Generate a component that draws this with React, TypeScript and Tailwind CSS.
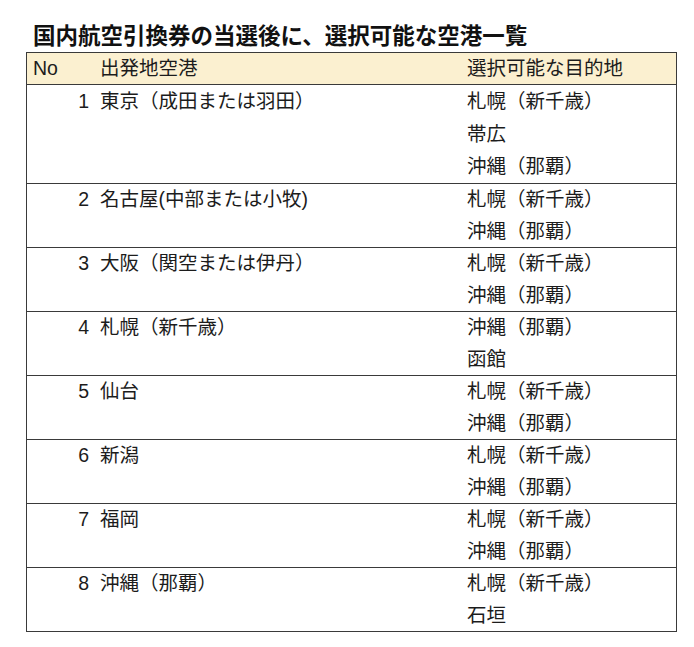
const rows: { no: number; origin: string; dests: string[] }[] = [
  { no: 1, origin: '東京（成田または羽田）', dests: ['札幌（新千歳）', '帯広', '沖縄（那覇）'] },
  { no: 2, origin: '名古屋(中部または小牧)', dests: ['札幌（新千歳）', '沖縄（那覇）'] },
  { no: 3, origin: '大阪（関空または伊丹）', dests: ['札幌（新千歳）', '沖縄（那覇）'] },
  { no: 4, origin: '札幌（新千歳）', dests: ['沖縄（那覇）', '函館'] },
  { no: 5, origin: '仙台', dests: ['札幌（新千歳）', '沖縄（那覇）'] },
  { no: 6, origin: '新潟', dests: ['札幌（新千歳）', '沖縄（那覇）'] },
  { no: 7, origin: '福岡', dests: ['札幌（新千歳）', '沖縄（那覇）'] },
  { no: 8, origin: '沖縄（那覇）', dests: ['札幌（新千歳）', '石垣'] },
];

export default function App() {
  return (
    <div
      className="w-[694px] h-[647px] bg-white text-[#1c1c1c] pt-[22px] pl-[26px]"
      style={{ fontFamily: '"Liberation Sans", "Noto Sans CJK JP", sans-serif' }}
    >
      <h1 className="pl-[7px] text-[22.5px] font-bold leading-[30px] h-[30px] text-[#111]">
        国内航空引換券の当選後に、選択可能な空港一覧
      </h1>
      <div className="w-[651px] border border-[#3a3a3a] text-[19.5px]">
        {/* header */}
        <div className="grid grid-cols-[62px_378px_1fr] h-[32px] items-center bg-[#fbf0d0] border-b border-[#3a3a3a]">
          <div className="pl-[6px]">No</div>
          <div className="pl-[11px]">出発地空港</div>
          <div>選択可能な目的地</div>
        </div>
        {rows.map((r) => {
          // first row sits a little looser in the original
          const line = r.dests.length > 2 ? 'h-[32.7px] leading-[32.7px]' : 'h-[31.5px] leading-[31.5px]';
          return (
            <div
              key={r.no}
              className="grid grid-cols-[62px_378px_1fr] border-b last:border-b-0 border-[#3a3a3a]"
            >
              <div className={`text-right ${line}`}>{r.no}</div>
              <div className={`pl-[11px] ${line}`}>{r.origin}</div>
              <div className="flex flex-col">
                {r.dests.map((d) => (
                  <div key={d} className={line}>
                    {d}
                  </div>
                ))}
              </div>
            </div>
          );
        })}
      </div>
    </div>
  );
}
